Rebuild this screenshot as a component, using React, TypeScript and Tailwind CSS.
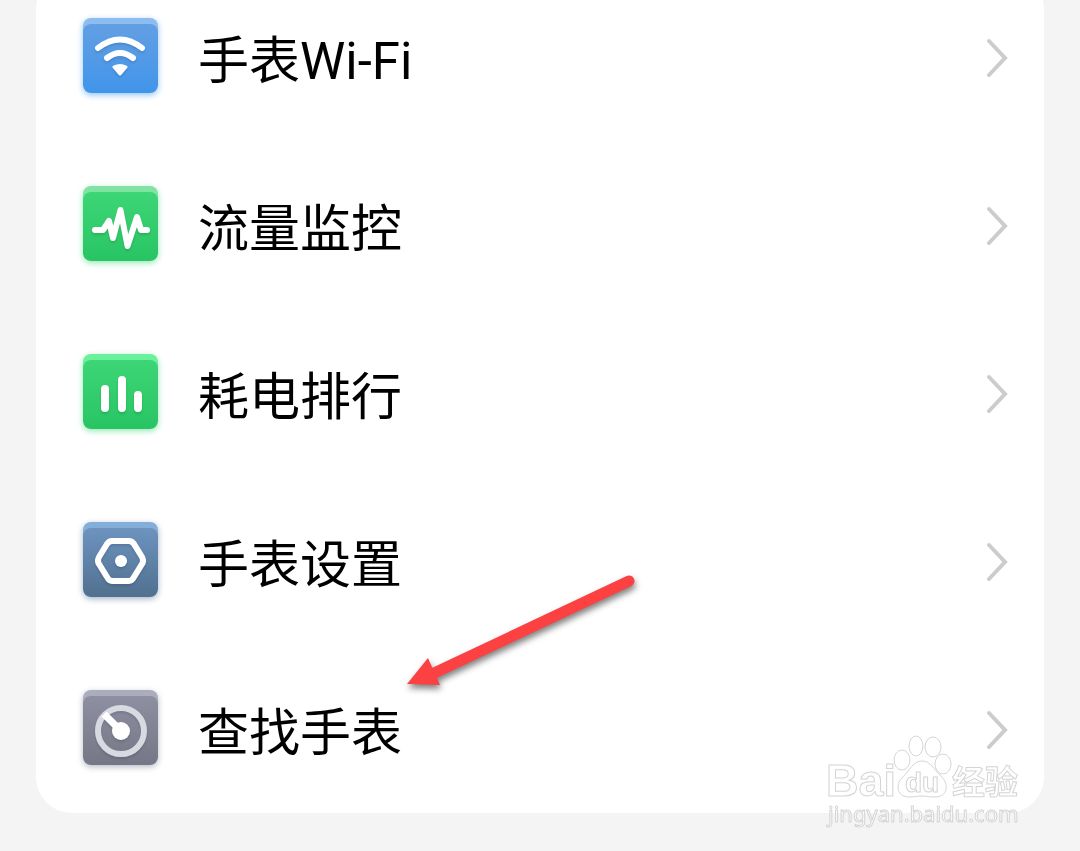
import type { ReactNode } from "react";

type Item = {
  label: string;
  tile: string; // lighter strip on the top + glow under the tile
  face: string; // the main gradient
  icon: ReactNode;
};

const items: Item[] = [
  {
    label: "手表Wi-Fi",
    tile: "bg-[#8dbdf0] shadow-[0_2px_6px_#8fc3f5]",
    face: "bg-linear-to-b from-[#629fe4] to-[#4095ea]",
    icon: (
      <>
        <path d="M15 30Q37 13 59 30" strokeWidth="6" />
        <path d="M24 40Q37 30 50 40" strokeWidth="6" />
        <path d="M31 49Q37 46 43 49L37 56Z" fill="white" strokeWidth="3" />
      </>
    ),
  },
  {
    label: "流量监控",
    tile: "bg-[#80e3a4] shadow-[0_2px_6px_#93e8b4]",
    face: "bg-linear-to-b from-[#3dd677] to-[#28c463]",
    icon: (
      <path
        d="M12 44H20L26 35L30 52L37.500 24L44.500 60L54 31L58 44H64"
        strokeWidth="6"
      />
    ),
  },
  {
    label: "耗电排行",
    tile: "bg-[#6cf09c] shadow-[0_2px_6px_#93e8b4]",
    face: "bg-linear-to-b from-[#3dd677] to-[#28c463]",
    icon: (
      <path d="M22 35V54M39 26V54M55 41V54" strokeWidth="8" />
    ),
  },
  {
    label: "手表设置",
    tile: "bg-[#83aed9] shadow-[0_2px_6px_#a3b5c9]",
    face: "bg-linear-to-b from-[#6d93bf] to-[#51708f]",
    icon: (
      <>
        <path
          d="M29 19H46Q49 19 51 22L59 35Q61 39 59 42L51 55Q49 59 46 59H29Q26 59 24 55L16 42Q14 39 16 35L24 22Q26 19 29 19Z"
          strokeWidth="6"
        />
        <circle cx="38" cy="39" r="6" fill="white" stroke="none" />
      </>
    ),
  },
  {
    label: "查找手表",
    tile: "bg-[#abadbc] shadow-[0_2px_6px_#b9bbc6]",
    face: "bg-linear-to-b from-[#8e90a2] to-[#757786]",
    icon: (
      <>
        <circle cx="38" cy="41" r="23" stroke="#d9dae1" strokeWidth="6" />
        <path d="M21 24L38 41" strokeWidth="7" strokeLinecap="butt" />
        <circle cx="38" cy="41" r="9" fill="white" stroke="none" />
      </>
    ),
  },
];

function Row({ label, tile, face, icon }: Item) {
  return (
    <li>
      <a href="#" className="flex h-[168px] items-center pr-9 pl-[47px]">
        <span className={`mb-1 size-[75px] shrink-0 overflow-clip rounded-lg pt-1.5 ${tile}`}>
          <span className={`block h-full rounded-lg ${face}`}>
            <svg
              viewBox="0 6 75 69"
              className="block w-full drop-shadow-[0_2px_1px_rgba(0,0,0,0.12)]"
              fill="none"
              stroke="white"
              strokeLinecap="round"
              strokeLinejoin="round"
            >
              {icon}
            </svg>
          </span>
        </span>
        <span className="ml-10 grow pt-2 text-[51px] leading-none">{label}</span>
        <svg
          viewBox="0 0 22 40"
          className="mt-0.5 h-10 w-[22px] shrink-0"
          fill="none"
          stroke="#cccccc"
          strokeWidth="4"
          strokeLinecap="round"
        >
          <path d="M3 3L19 20L3 37" />
        </svg>
      </a>
    </li>
  );
}

// red pointer lying over the list
function Arrow() {
  return (
    <svg
      viewBox="0 0 240 120"
      className="pointer-events-none absolute top-[597px] left-[364px] h-[120px] w-[240px] drop-shadow-[1px_4px_3px_rgba(0,0,0,0.5)]"
      fill="#fb4141"
    >
      <path d="M30 105L229 11" stroke="#fb4141" strokeWidth="11" strokeLinecap="round" />
      <path d="M7 114L28 88L40 115Z" />
    </svg>
  );
}

function Watermark() {
  return (
    <svg
      viewBox="0 0 200 96"
      className="pointer-events-none absolute right-[18px] -bottom-[17px] h-24 w-[200px] opacity-95"
      fill="white"
      stroke="#d2d2d2"
      strokeWidth="1"
      fontFamily="'Liberation Sans', 'Noto Sans CJK SC', sans-serif"
    >
      <text x="0" y="62" fontSize="45" fontWeight="700">Bai</text>
      <ellipse cx="76" cy="26" rx="8" ry="10" />
      <ellipse cx="90" cy="12" rx="7" ry="10" />
      <ellipse cx="107" cy="13" rx="8" ry="10" />
      <ellipse cx="117" cy="30" rx="8" ry="10" />
      <path d="M96 27C105 27 108 36 115 42C124 51 121 63 109 63C103 63 101 62 96 62C91 62 88 63 83 63C71 63 69 51 76 44C84 36 87 27 96 27Z" />
      <text x="79" y="58" fontSize="28" fontWeight="700">du</text>
      <text x="126" y="60" fontSize="33" fontWeight="700">经验</text>
      <text x="2" y="88" fontSize="22" fontFamily="'Noto Sans', sans-serif">
        jingyan.baidu.com
      </text>
    </svg>
  );
}

export default function App() {
  return (
    <main className="min-h-screen overflow-hidden bg-[#f4f4f4] px-9 font-[Roboto,'Noto_Sans_CJK_SC',sans-serif] text-black">
      <div className="relative -mt-[27px] rounded-[36px] bg-white">
        <ul>
          {items.map((item) => (
            <Row key={item.label} {...item} />
          ))}
        </ul>
        <Arrow />
        <Watermark />
      </div>
    </main>
  );
}
